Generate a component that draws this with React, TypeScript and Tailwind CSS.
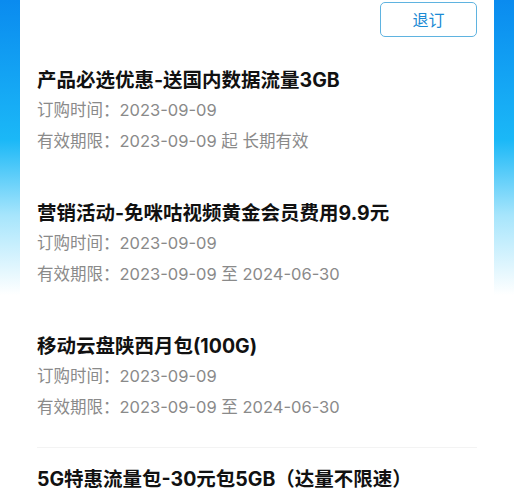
const items = [
  {
    title: "产品必选优惠-送国内数据流量3GB",
    ordered: "2023-09-09",
    valid: "2023-09-09 起 长期有效",
  },
  {
    title: "营销活动-免咪咕视频黄金会员费用9.9元",
    ordered: "2023-09-09",
    valid: "2023-09-09 至 2024-06-30",
  },
  {
    title: "移动云盘陕西月包(100G)",
    ordered: "2023-09-09",
    valid: "2023-09-09 至 2024-06-30",
  },
  {
    title: "5G特惠流量包-30元包5GB（达量不限速）",
    ordered: "2023-09-09",
    valid: "2023-09-09 至 2024-06-30",
  },
];

export default function App() {
  return (
    <div
      className="h-[500px] overflow-hidden px-[20px] bg-[linear-gradient(180deg,#0a8bef_0px,#1bb8f7_140px,#a6e5fc_215px,#ffffff_295px)]"
      style={{ fontFamily: 'Inter, "Noto Sans CJK SC", sans-serif' }}
    >
      <div className="h-full bg-white">
        <div className="flex justify-end pr-[17px] pt-[2px]">
          <button className="h-[35px] w-[97px] rounded-[5px] border border-[#5fb3e0] text-[16px] text-[#1a8ad4]">
            退订
          </button>
        </div>
        <div className="mt-[12px] px-[17px]">
          {items.map((it, i) => (
            <div
              key={it.title}
              className={
                i === 2
                  ? "border-b border-[#f3f3f3] pt-[16px] pb-[24px]"
                  : "border-b border-transparent pt-[16px] pb-[24px]"
              }
            >
              <div className="text-[19.5px] font-bold leading-[30px] text-[#111]">{it.title}</div>
              <div className="text-[16.5px] leading-[31px] text-[#8a8a8a]">
                订购时间：{it.ordered}
              </div>
              <div className="text-[16.5px] leading-[31px] text-[#8a8a8a]">
                有效期限：{it.valid}
              </div>
            </div>
          ))}
        </div>
      </div>
    </div>
  );
}
